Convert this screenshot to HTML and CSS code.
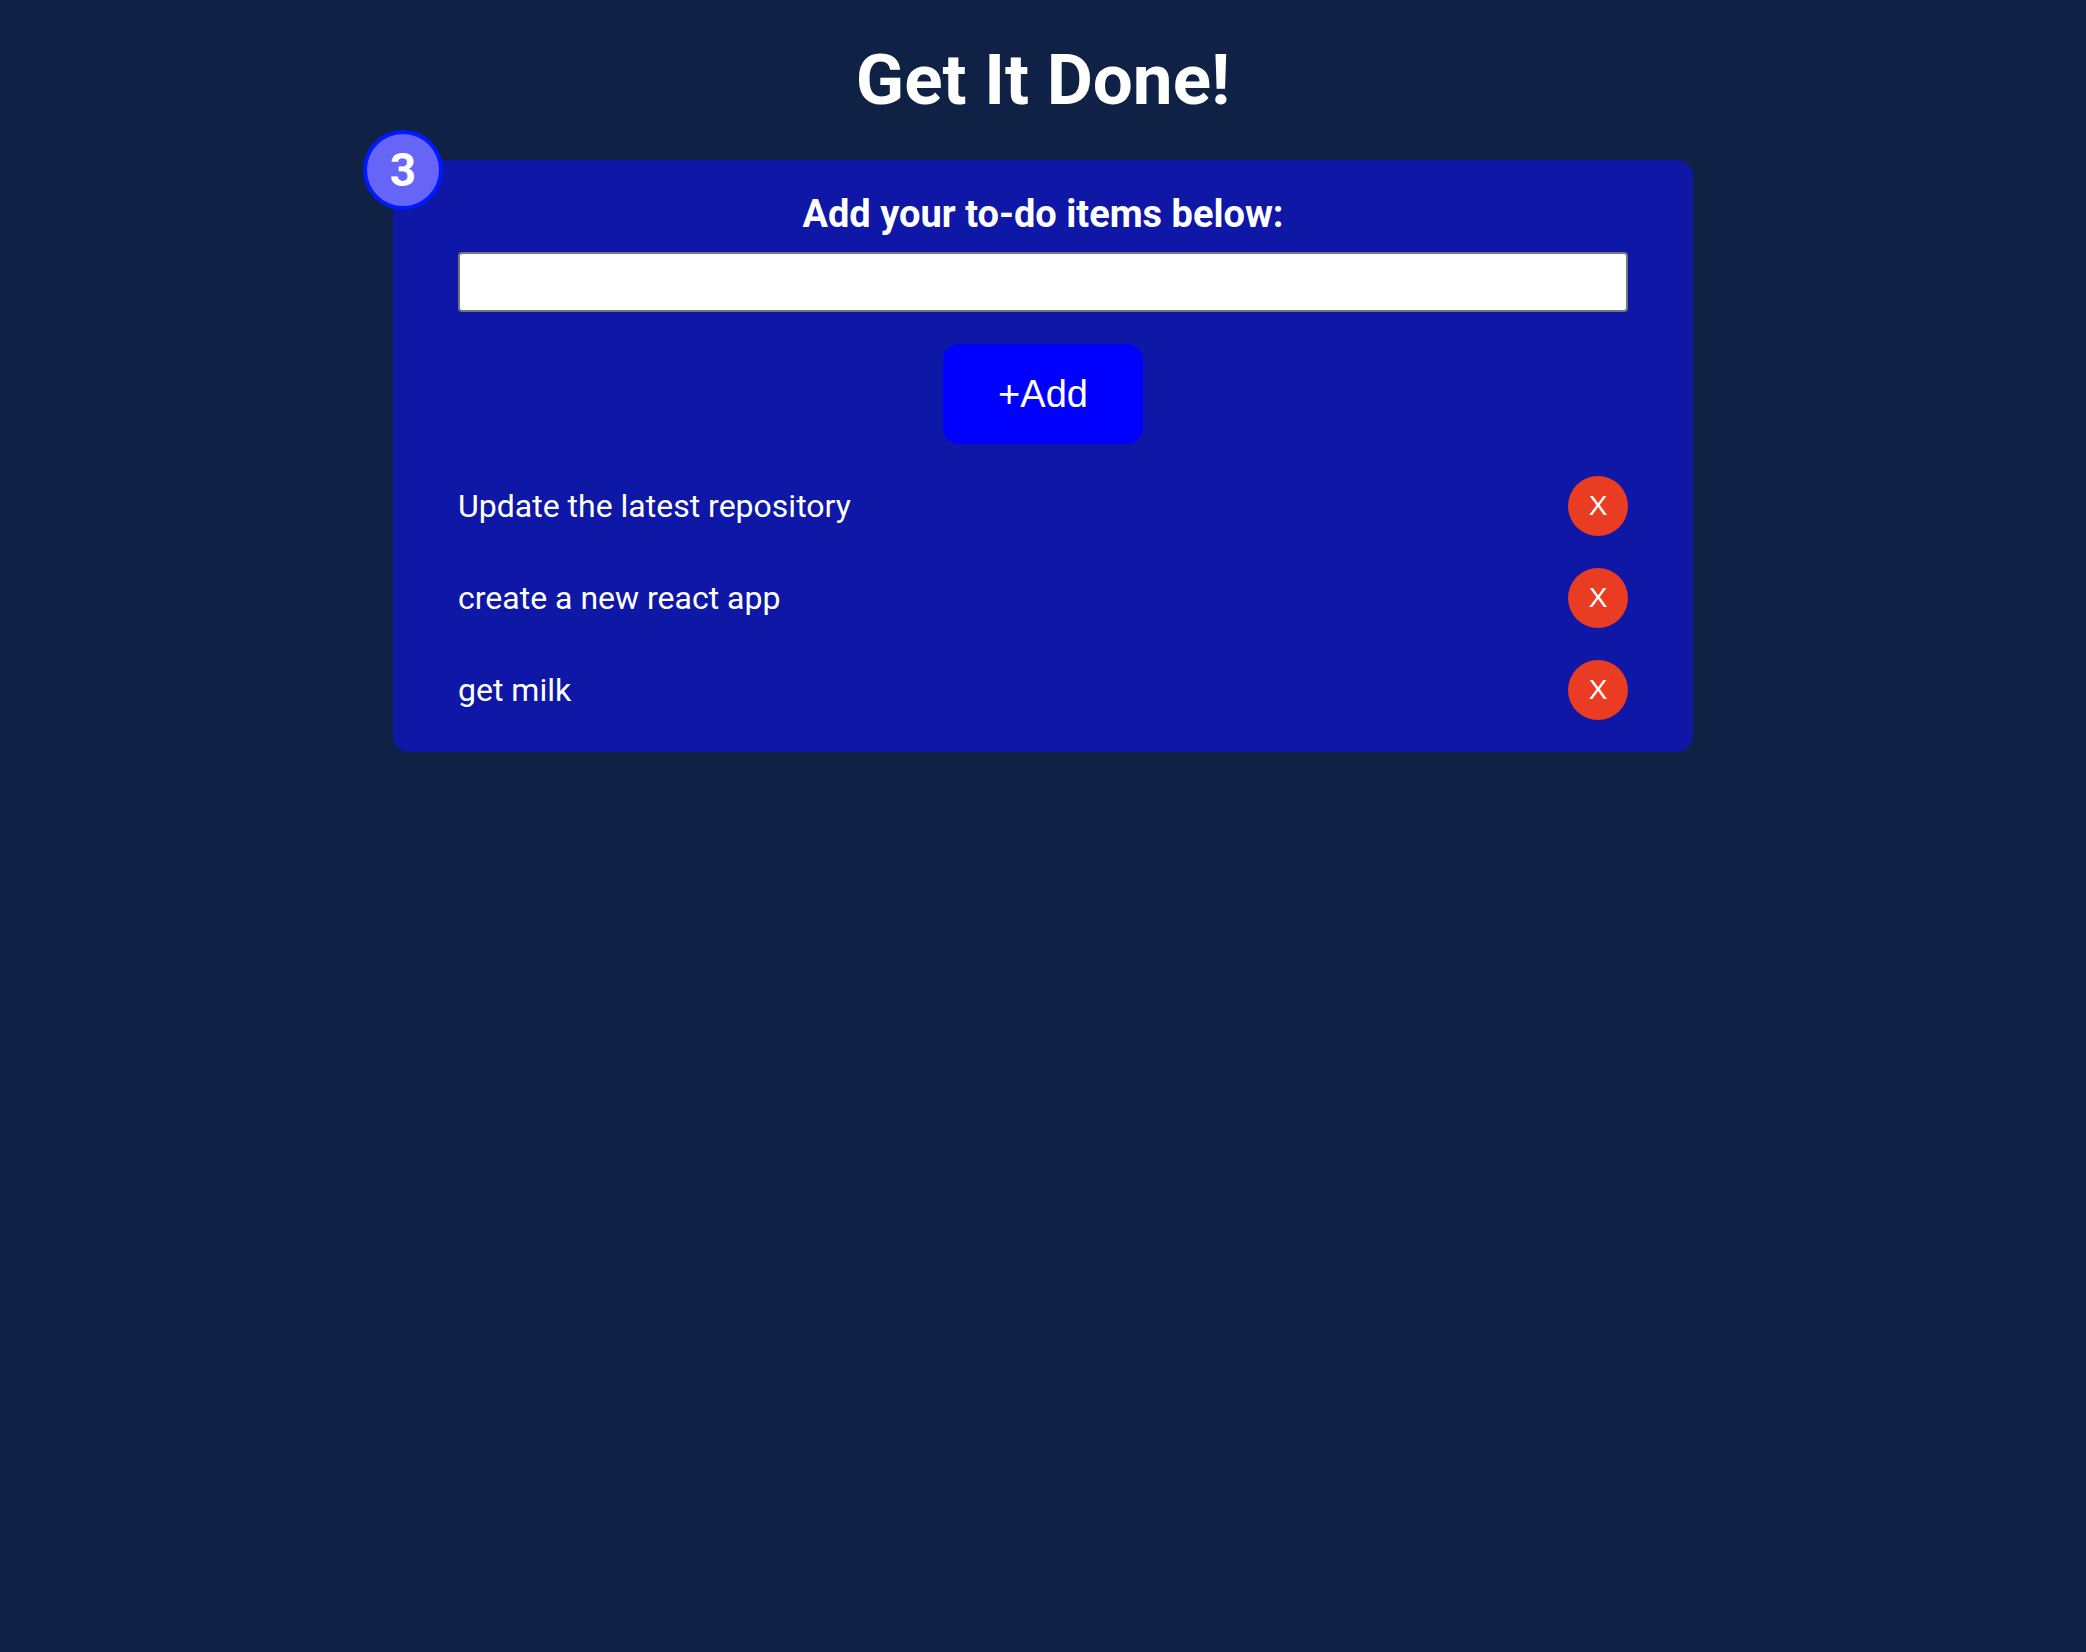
FILE: index.html
```html
<!DOCTYPE html>
<html lang="en">
<head>
<meta charset="utf-8">
<meta name="viewport" content="width=device-width, initial-scale=1">
<title>Get It Done!</title>
<link rel="stylesheet" href="styles.css">
</head>
<body>
<main class="app">
  <h1 class="title">Get It Done!</h1>
  <section class="card">
    <span class="count">3</span>
    <form class="form">
      <label class="label" for="todo">Add your to-do items below:</label>
      <input class="input" id="todo" type="text">
      <button class="add" type="button">+Add</button>
    </form>
    <ul class="list">
      <li class="item">Update the latest repository <button class="remove" type="button">X</button></li>
      <li class="item">create a new react app <button class="remove" type="button">X</button></li>
      <li class="item">get milk <button class="remove" type="button">X</button></li>
    </ul>
  </section>
</main>
</body>
</html>
```

FILE: styles.css
```css
* {
  box-sizing: border-box;
}

body {
  margin: 0;
  min-height: 100vh;
  background: #0f2144;
  color: #fff;
  font-family: Roboto, "Liberation Sans", sans-serif;
  font-size: 32px;
}

.app {
  display: flex;
  flex-direction: column;
  align-items: center;
  gap: 40px;
  padding: 40px 32px;
}

.title {
  margin: 0;
  font-size: 71px;
  line-height: 80px;
}

.card {
  position: relative;
  width: 100%;
  max-width: 1300px;
  padding: 32px 65px;
  border-radius: 16px;
  background: #0e17a6;
}

.count {
  position: absolute;
  top: -30px;
  left: -30px;
  display: grid;
  place-items: center;
  width: 80px;
  height: 80px;
  border: 4px solid #0019ff;
  border-radius: 50%;
  background: #6665f8;
  font-size: 46px;
  font-weight: 700;
}

.form {
  display: flex;
  flex-direction: column;
  align-items: center;
}

.label {
  margin-bottom: 16px;
  font-size: 38px;
  font-weight: 700;
  line-height: 44px;
}

.input {
  width: 100%;
  height: 60px;
  margin-bottom: 32px;
  padding: 4px 8px;
  border: 2px solid #767676;
  border-radius: 4px;
  background: #fff;
  font: inherit;
}

.add {
  width: 200px;
  height: 100px;
  border: 0;
  border-radius: 16px;
  background: #00f;
  color: #fff;
  font: 38px "Liberation Sans", Arial, sans-serif;
}

.list {
  display: grid;
  gap: 32px;
  margin: 32px 0 0;
  padding: 0;
  list-style: none;
}

.item {
  display: flex;
  align-items: center;
  justify-content: space-between;
}

.remove {
  width: 60px;
  height: 60px;
  padding: 0;
  border: 0;
  border-radius: 50%;
  background: #ea3b23;
  color: #fff;
  font: 28px "Liberation Sans", Arial, sans-serif;
}
```
